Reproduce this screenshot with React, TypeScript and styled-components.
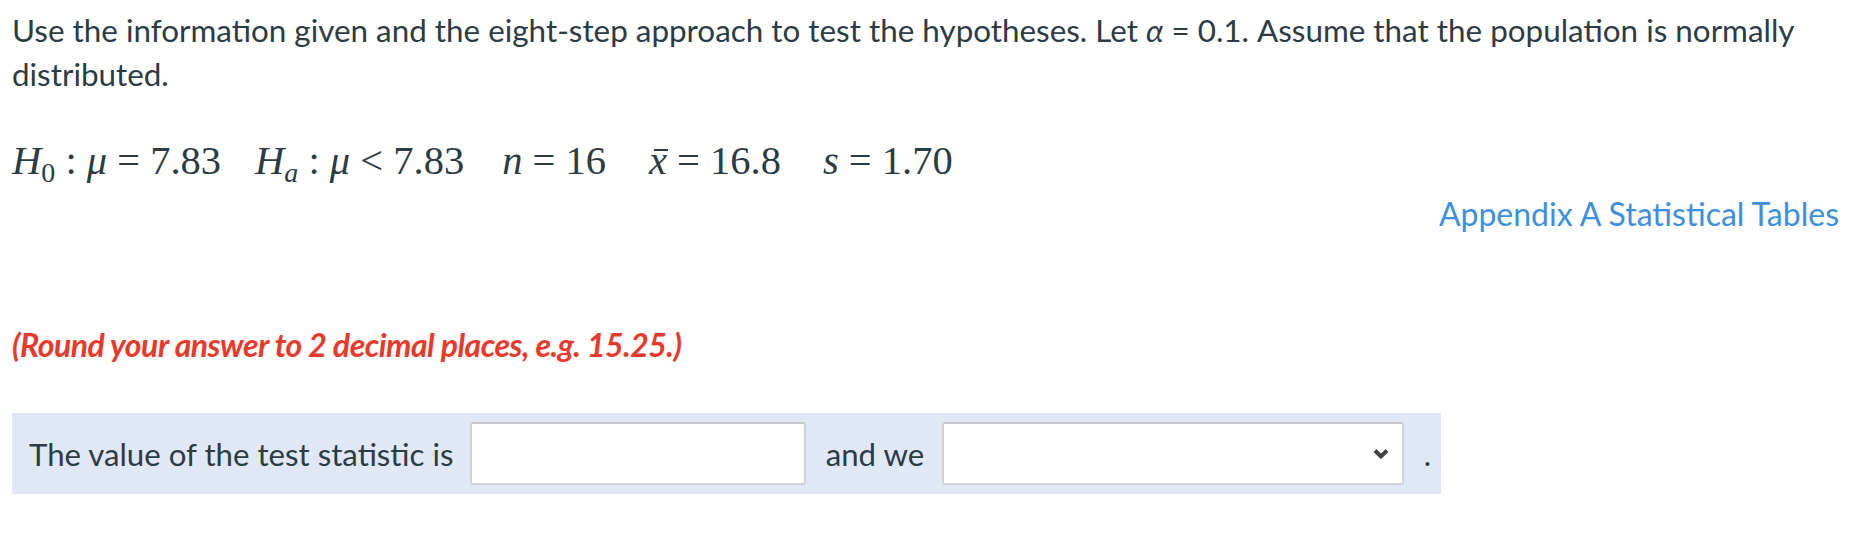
import React from 'react';
import styled, { createGlobalStyle } from 'styled-components';

const GlobalStyle = createGlobalStyle`
  html, body {
    margin: 0;
    padding: 0;
    background: #ffffff;
  }
  body {
    font-family: Lato, "Open Sans", "Liberation Sans", sans-serif;
    color: #2d3b45;
  }
`;

const Page = styled.div`
  padding: 8px 12px 0 12px;
  width: 1864px;
  box-sizing: border-box;
`;

const Prompt = styled.p`
  margin: 0;
  font-size: 31.4px;
  line-height: 44px;
  padding-right: 12px;
`;

const Italic = styled.i`
  font-style: italic;
`;

const MathLine = styled.div`
  margin-top: 41px;
  font-family: "Liberation Serif", "Times New Roman", serif;
  font-size: 40.5px;
  line-height: 48px;
  display: flex;
`;

const Term = styled.span<{ $gap?: number }>`
  white-space: nowrap;
  margin-left: ${({ $gap = 0 }) => $gap}px;
`;

const Sub = styled.sub`
  font-size: 28px;
  vertical-align: -8px;
  line-height: 0;
`;

const Mean = styled.i`
  position: relative;
  display: inline-block;
  line-height: 1;
  font-style: italic;

  &::before {
    content: '';
    position: absolute;
    left: 0.12em;
    top: 0.2em;
    width: 0.34em;
    height: 2px;
    background: #2d3b45;
  }
`;

const LinkRow = styled.div`
  display: flex;
  justify-content: flex-end;
  margin-top: 7px;
  padding-right: 13px;
`;

const TableLink = styled.a`
  font-size: 32px;
  line-height: 44px;
  color: #3d8fe0;
  text-decoration: none;
`;

const Hint = styled.p`
  margin: 87px 0 0 0;
  font-size: 32px;
  line-height: 44px;
  font-weight: 700;
  font-style: italic;
  color: #e8392b;
  letter-spacing: -0.5px;
`;

const AnswerBar = styled.div`
  margin-top: 46px;
  width: 1429px;
  box-sizing: border-box;
  background: #dfe8f4;
  padding: 9px 10px 9px 17px;
  display: flex;
  align-items: center;
  font-size: 31.2px;
`;

const Label = styled.span<{ $gap: number }>`
  white-space: nowrap;
  margin-right: ${({ $gap }) => $gap}px;
`;

const TextBox = styled.input`
  width: 339px;
  height: 63px;
  box-sizing: border-box;
  border: 2px solid #cfd3d7;
  border-top-color: #c4c8cc;
  border-radius: 3px;
  background: #ffffff;
  margin-right: 20px;
  font-size: 24px;
  padding: 0 10px;
`;

const SelectBox = styled.div`
  position: relative;
  width: 467px;
  height: 63px;
  box-sizing: border-box;
  border: 2px solid #cfd3d7;
  border-top-color: #c4c8cc;
  border-radius: 3px;
  background: #ffffff;
  margin-right: 20px;
`;

const Chevron = styled.svg`
  position: absolute;
  right: 13px;
  top: 50%;
  transform: translateY(-50%);
`;

export default function App() {
  return (
    <>
      <GlobalStyle />
      <Page>
        <Prompt>
          Use the information given and the eight-step approach to test the hypotheses. Let{' '}
          <Italic>α</Italic> = 0.1. Assume that the population is normally distributed.
        </Prompt>
        <MathLine>
          <Term>
            <Italic>H</Italic>
            <Sub>0</Sub> : <Italic>μ</Italic> = 7.83
          </Term>
          <Term $gap={34}>
            <Italic>H</Italic>
            <Sub>
              <Italic>a</Italic>
            </Sub>{' '}
            : <Italic>μ</Italic> &lt; 7.83
          </Term>
          <Term $gap={38}>
            <Italic>n</Italic> = 16
          </Term>
          <Term $gap={43}>
            <Mean>x</Mean> = 16.8
          </Term>
          <Term $gap={42}>
            <Italic>s</Italic> = 1.70
          </Term>
        </MathLine>
        <LinkRow>
          <TableLink href="#">Appendix A Statistical Tables</TableLink>
        </LinkRow>
        <Hint>(Round your answer to 2 decimal places, e.g. 15.25.)</Hint>
        <AnswerBar>
          <Label $gap={17}>The value of the test statistic is</Label>
          <TextBox type="text" />
          <Label $gap={18}>and we</Label>
          <SelectBox>
            <Chevron width="16" height="12" viewBox="0 0 16 12">
              <path d="M2 2.5 L8 8.5 L14 2.5" fill="none" stroke="#444" strokeWidth="4" />
            </Chevron>
          </SelectBox>
          <span>.</span>
        </AnswerBar>
      </Page>
    </>
  );
}
